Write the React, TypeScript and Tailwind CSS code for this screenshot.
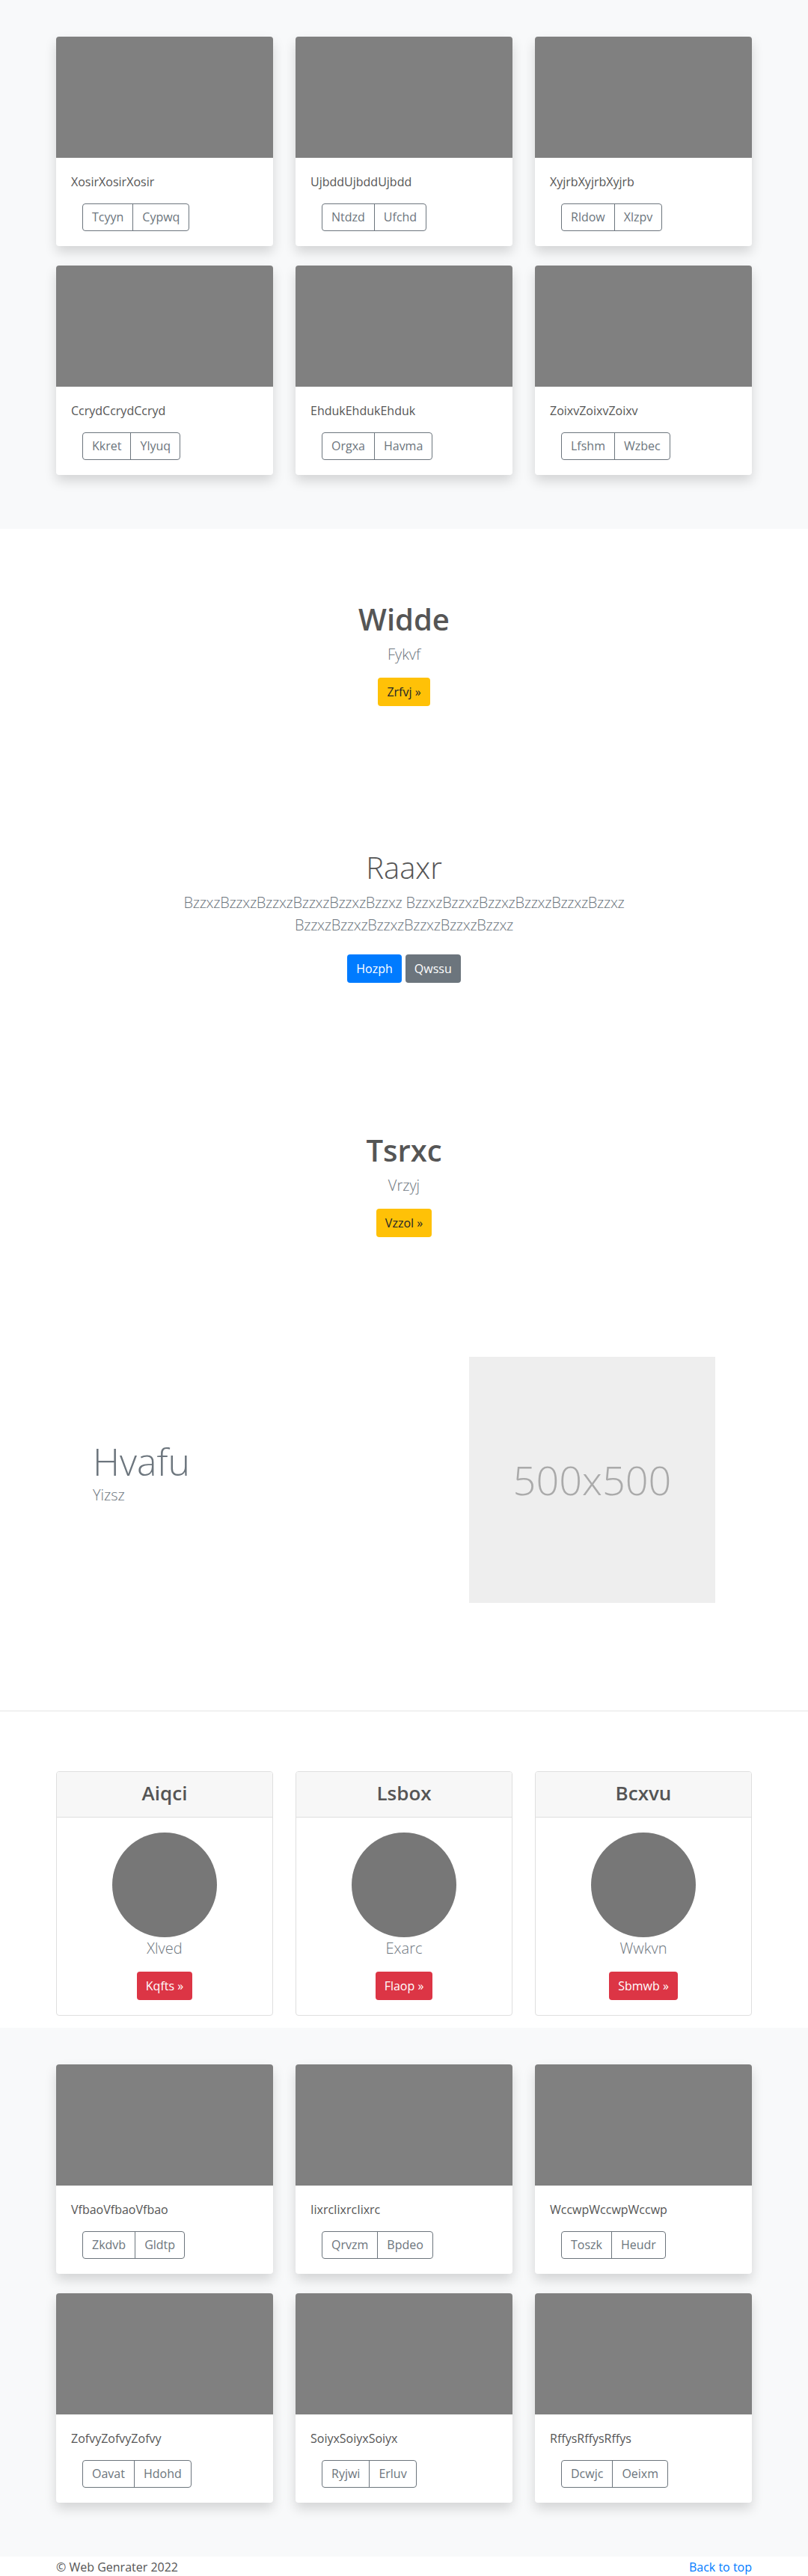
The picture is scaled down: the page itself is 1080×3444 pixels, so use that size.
import React from "react";

type AlbumItem = { title: string; a: string; b: string };

const albumTop: AlbumItem[] = [
  { title: "XosirXosirXosir", a: "Tcyyn", b: "Cypwq" },
  { title: "UjbddUjbddUjbdd", a: "Ntdzd", b: "Ufchd" },
  { title: "XyjrbXyjrbXyjrb", a: "Rldow", b: "Xlzpv" },
  { title: "CcrydCcrydCcryd", a: "Kkret", b: "Ylyuq" },
  { title: "EhdukEhdukEhduk", a: "Orgxa", b: "Havma" },
  { title: "ZoixvZoixvZoixv", a: "Lfshm", b: "Wzbec" },
];

const albumBottom: AlbumItem[] = [
  { title: "VfbaoVfbaoVfbao", a: "Zkdvb", b: "Gldtp" },
  { title: "IixrcIixrcIixrc", a: "Qrvzm", b: "Bpdeo" },
  { title: "WccwpWccwpWccwp", a: "Toszk", b: "Heudr" },
  { title: "ZofvyZofvyZofvy", a: "Oavat", b: "Hdohd" },
  { title: "SoiyxSoiyxSoiyx", a: "Ryjwi", b: "Erluv" },
  { title: "RffysRffysRffys", a: "Dcwjc", b: "Oeixm" },
];

const plans = [
  { name: "Aiqci", sub: "Xlved", btn: "Kqfts" },
  { name: "Lsbox", sub: "Exarc", btn: "Flaop" },
  { name: "Bcxvu", sub: "Wwkvn", btn: "Sbmwb" },
];

function Album({ items }: { items: AlbumItem[] }) {
  return (
    <section className="bg-[#f8f9fa] pt-[49px] pb-[72px]">
      <div className="mx-auto grid w-[930px] grid-cols-3 gap-x-[30px] gap-y-[26px]">
        {items.map((it) => (
          <div
            key={it.title}
            className="overflow-hidden rounded-[4px] bg-white shadow-[0_8px_16px_rgba(0,0,0,0.15)]"
          >
            <div className="h-[162px] bg-[#808080]" />
            <div className="p-5">
              <p className="text-base leading-6 text-[#555]">{it.title}</p>
              <div className="mt-[17px] ml-[15px] inline-flex rounded-[4px] border border-[#6c757d] text-base leading-[25px] text-[#6c757d]">
                <button className="px-3 py-[5px]">{it.a}</button>
                <button className="border-l border-[#6c757d] px-3 py-[5px]">{it.b}</button>
              </div>
            </div>
          </div>
        ))}
      </div>
    </section>
  );
}

export default function App() {
  const lead = "Bzzxz".repeat(6);
  return (
    <div className="bg-white font-['Open_Sans',sans-serif] text-[#555]">
      <Album items={albumTop} />

      <section className="pt-[97px] text-center">
        <h1 className="text-[40px] leading-[48px] font-semibold text-[#555]">Widde</h1>
        <p className="mt-2 text-[20px] leading-[30px] font-light text-[#6c757d]">Fykvf</p>
        <div className="mt-4 flex justify-center">
          <a className="rounded-[4px] bg-[#ffc107] px-3 py-[7px] text-base leading-6 text-[#212529]">
            Zrfvj »
          </a>
        </div>
      </section>

      <section className="pt-[192px] text-center">
        <h1 className="text-[40px] leading-[48px] font-light text-[#555]">Raaxr</h1>
        <p className="mx-auto mt-2 max-w-[700px] text-[20px] leading-[30px] font-light tracking-[-0.3px] text-[#6c757d]">
          {lead} {lead} {lead}
        </p>
        <div className="mt-6 flex justify-center gap-[5px]">
          <a className="rounded-[4px] bg-[#007bff] px-3 py-[7px] text-base leading-6 text-white">Hozph</a>
          <a className="rounded-[4px] bg-[#6c757d] px-3 py-[7px] text-base leading-6 text-white">Qwssu</a>
        </div>
      </section>

      <section className="pt-[200px] text-center">
        <h1 className="text-[40px] leading-[48px] font-semibold text-[#555]">Tsrxc</h1>
        <p className="mt-2 text-[20px] leading-[30px] font-light text-[#6c757d]">Vrzyj</p>
        <div className="mt-4 flex justify-center">
          <a className="rounded-[4px] bg-[#ffc107] px-3 py-[7px] text-base leading-6 text-[#212529]">
            Vzzol »
          </a>
        </div>
      </section>

      <section className="pt-[160px] pb-[144px]">
        <div className="mx-auto flex w-[930px] items-center px-[49px]">
          <div className="flex-1 pb-1">
            <h1 className="text-[50px] leading-[60px] font-light text-[#6c757d]">Hvafu</h1>
            <p className="mb-4 text-[20px] leading-[30px] font-light text-[#6c757d]">Yizsz</p>
          </div>
          <div className="flex h-[329px] w-[329px] items-center justify-center bg-[#eeeeee] text-[54px] font-light text-[#aaaaaa]">
            500x500
          </div>
        </div>
      </section>

      <section className="border-t border-[#e5e5e5] pt-[80px] pb-[16px]">
        <div className="mx-auto grid w-[930px] grid-cols-3 gap-x-[30px]">
          {plans.map((p) => (
            <div key={p.name} className="overflow-hidden rounded-[4px] border border-[#dfdfdf] bg-white text-center">
              <div className="flex h-[61px] items-center justify-center border-b border-[#dfdfdf] bg-[#f7f7f7] pb-1">
                <h4 className="text-[26px] leading-[32px] font-semibold text-[#555]">{p.name}</h4>
              </div>
              <div className="flex flex-col items-center p-5">
                <div className="h-[140px] w-[140px] rounded-full bg-[#777777]" />
                <p className="text-[20px] leading-[30px] font-light text-[#6c757d]">{p.sub}</p>
                <a className="mt-4 rounded-[4px] bg-[#dc3545] px-3 py-[7px] text-base leading-6 text-white">
                  {p.btn} »
                </a>
              </div>
            </div>
          ))}
        </div>
      </section>

      <Album items={albumBottom} />

      <footer className="pt-[2px]">
        <div className="mx-auto flex w-[930px] justify-between text-base leading-6">
          <p className="text-[#555]">© Web Genrater 2022</p>
          <a className="text-[#007bff]">Back to top</a>
        </div>
      </footer>
    </div>
  );
}
